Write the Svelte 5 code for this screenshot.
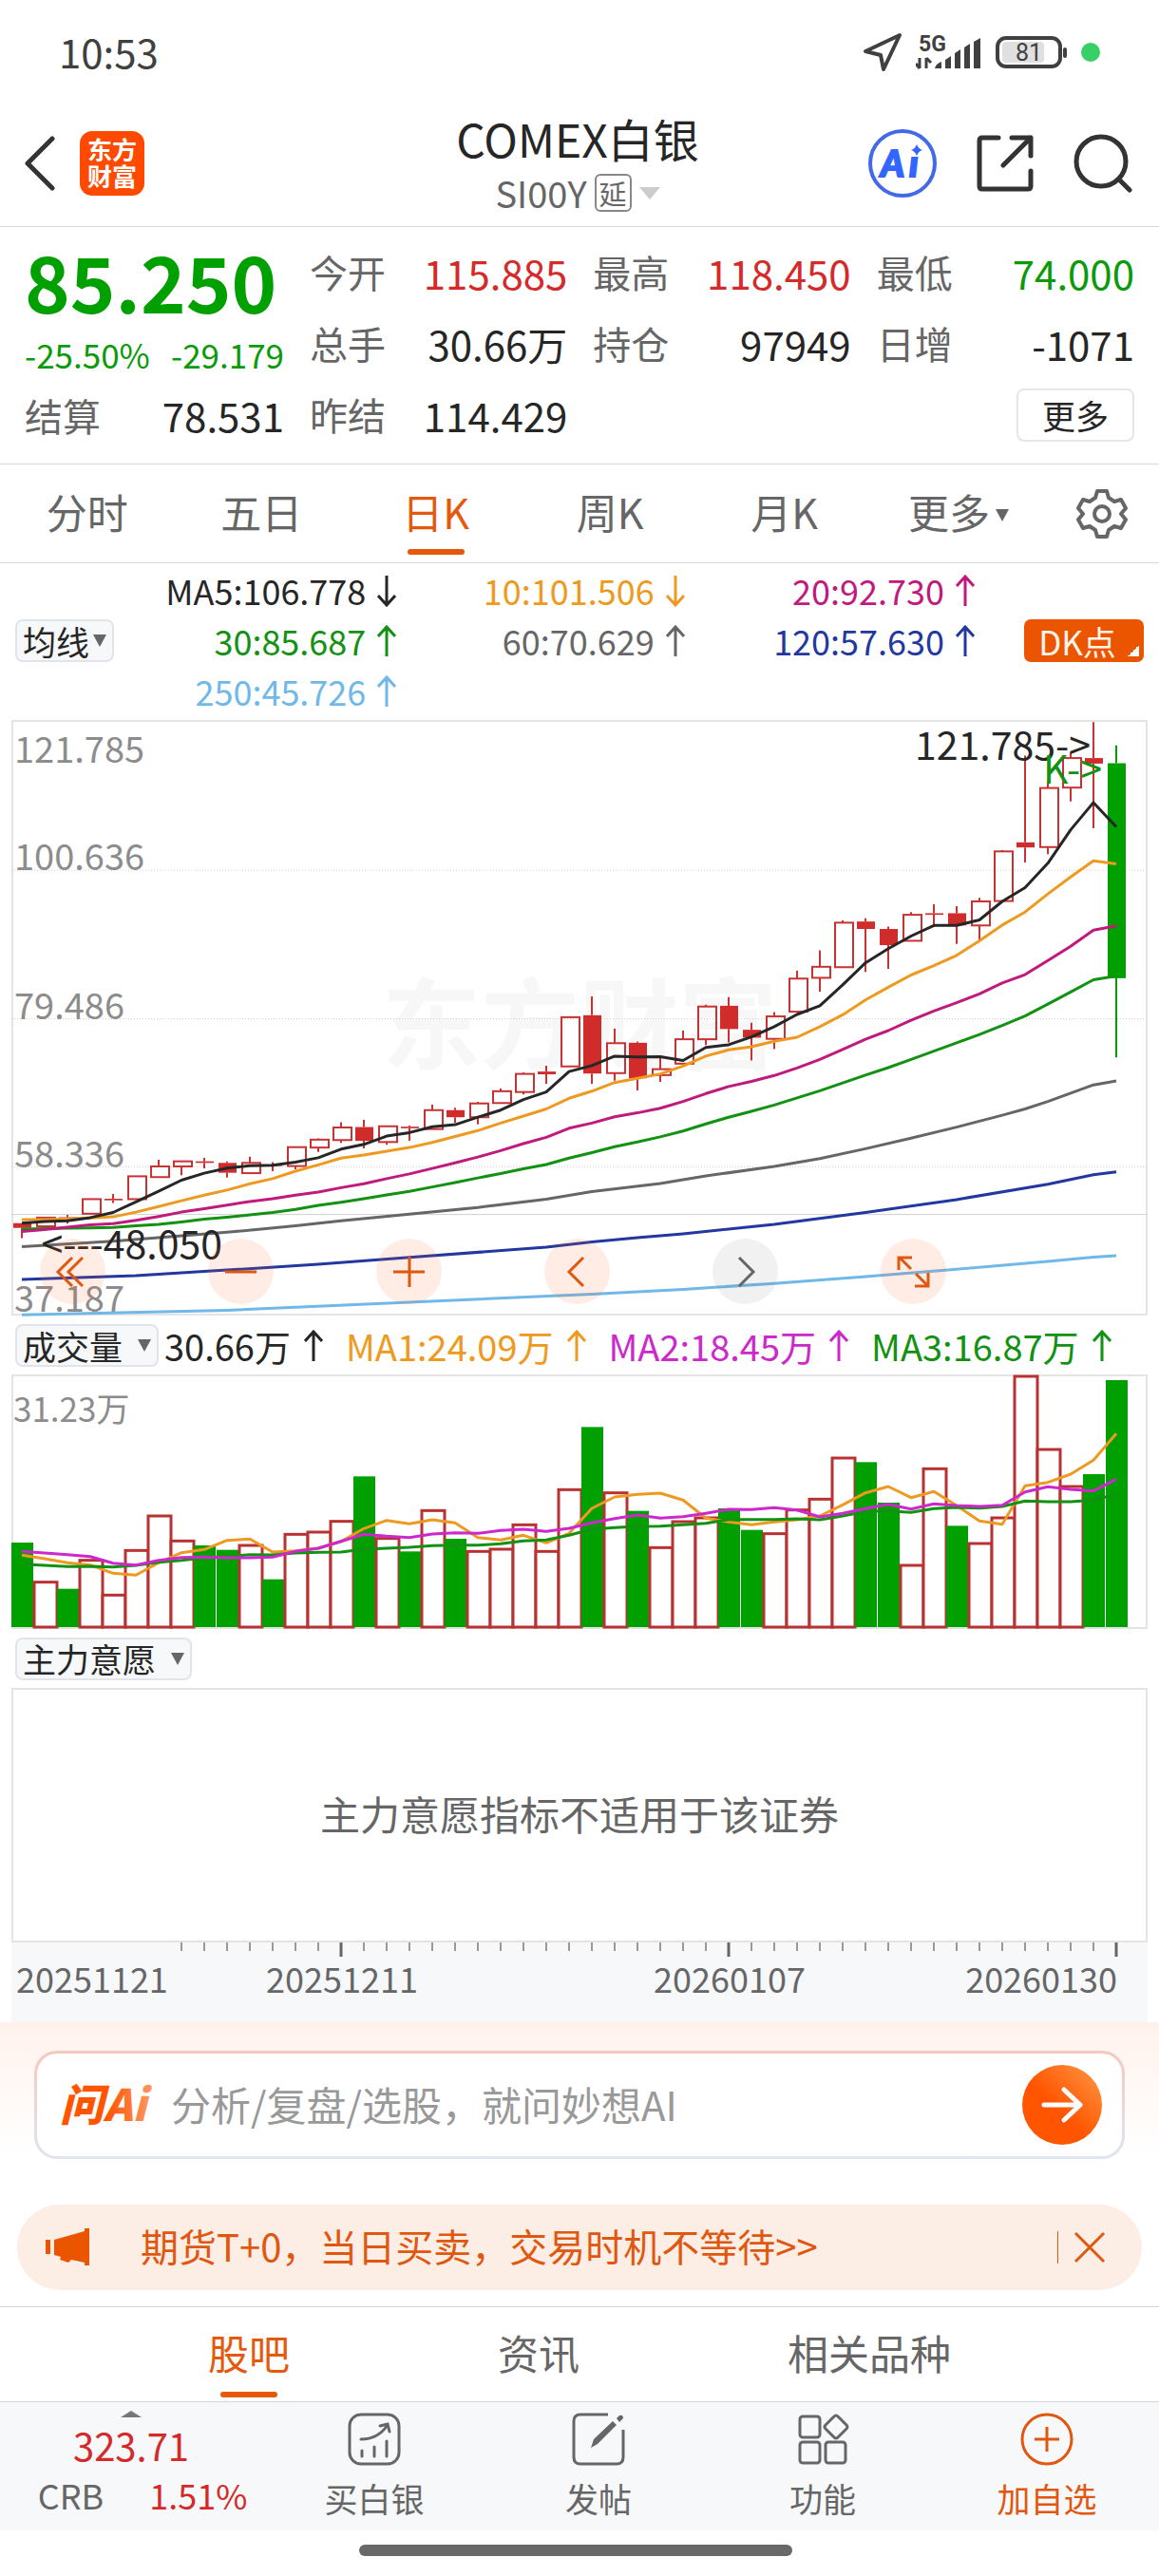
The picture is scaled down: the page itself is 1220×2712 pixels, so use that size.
<script lang="ts">
  type Kind = 'hollow' | 'solid' | 'fall';

  const quotes = [
    { label: '今开', value: '115.885', tone: 'up' },
    { label: '最高', value: '118.450', tone: 'up' },
    { label: '最低', value: '74.000', tone: 'down' },
    { label: '总手', value: '30.66万', tone: '' },
    { label: '持仓', value: '97949', tone: '' },
    { label: '日增', value: '-1071', tone: '' },
    { label: '昨结', value: '114.429', tone: '' },
  ];

  const periods = ['分时', '五日', '日K', '周K', '月K', '更多'];
  let period = $state('日K');

  const averages = [
    { text: 'MA5:106.778', tone: 'ma5', up: false },
    { text: '10:101.506', tone: 'ma10', up: false },
    { text: '20:92.730', tone: 'ma20', up: true },
    { text: '30:85.687', tone: 'ma30', up: true },
    { text: '60:70.629', tone: 'ma60', up: true },
    { text: '120:57.630', tone: 'ma120', up: true },
    { text: '250:45.726', tone: 'ma250', up: true },
  ];

  const volumeAverages = [
    { text: '30.66万', tone: 'ma5' },
    { text: 'MA1:24.09万', tone: 'ma10' },
    { text: 'MA2:18.45万', tone: 'vol2' },
    { text: 'MA3:16.87万', tone: 'ma30' },
  ];

  // body top, body bottom, high, low: ticks counted down from the chart's top
  const candles: [number, number, number, number, Kind][] = [
    [1297, 1309, 1297, 1335, 'solid'], [1283, 1305, 1283, 1305, 'hollow'], [1282, 1284, 1276, 1298, 'solid'],
    [1236, 1273, 1236, 1273, 'hollow'], [1235, 1239, 1223, 1246, 'solid'], [1178, 1236, 1178, 1236, 'hollow'],
    [1153, 1180, 1136, 1180, 'hollow'], [1140, 1153, 1140, 1175, 'hollow'], [1140, 1144, 1131, 1158, 'solid'],
    [1144, 1169, 1140, 1181, 'solid'], [1144, 1170, 1128, 1170, 'hollow'], [1149, 1152, 1142, 1165, 'solid'],
    [1104, 1152, 1104, 1160, 'hollow'], [1085, 1105, 1082, 1116, 'hollow'], [1054, 1086, 1041, 1093, 'hollow'],
    [1053, 1088, 1035, 1107, 'solid'], [1051, 1091, 1051, 1098, 'hollow'], [1052, 1056, 1049, 1088, 'solid'],
    [1010, 1058, 996, 1058, 'hollow'], [1010, 1028, 1004, 1042, 'solid'], [993, 1028, 989, 1046, 'hollow'],
    [962, 992, 955, 992, 'hollow'], [918, 964, 914, 970, 'hollow'], [912, 919, 897, 943, 'solid'],
    [774, 899, 774, 899, 'hollow'], [769, 917, 721, 943, 'solid'], [840, 916, 803, 935, 'hollow'],
    [839, 929, 836, 960, 'solid'], [906, 921, 876, 938, 'hollow'], [830, 892, 808, 892, 'hollow'],
    [747, 830, 742, 845, 'hollow'], [745, 804, 723, 838, 'solid'], [806, 826, 788, 884, 'solid'],
    [772, 829, 761, 855, 'hollow'], [676, 760, 656, 760, 'hollow'], [646, 674, 604, 709, 'hollow'],
    [534, 647, 528, 647, 'hollow'], [531, 550, 523, 659, 'solid'], [550, 591, 544, 651, 'solid'],
    [514, 580, 507, 580, 'hollow'], [510, 514, 487, 545, 'solid'], [510, 541, 492, 588, 'solid'],
    [480, 541, 471, 579, 'hollow'], [353, 479, 350, 479, 'hollow'], [330, 343, 110, 381, 'solid'],
    [192, 342, 172, 360, 'hollow'], [116, 191, 100, 226, 'hollow'], [116, 130, 25, 294, 'solid'],
    [129, 675, 84, 876, 'fall'],
  ];

  const ma5 = [1297, 1293, 1291, 1283, 1270, 1243, 1216, 1188, 1170, 1157, 1151, 1150, 1142, 1131, 1109, 1097, 1076, 1067, 1052, 1047, 1028, 1010, 983, 964, 912, 897, 873, 875, 874, 884, 851, 844, 824, 798, 767, 745, 692, 636, 600, 568, 541, 541, 527, 480, 445, 383, 298, 229, 291];
  const ma10 = [1288, 1288, 1286, 1284, 1281, 1269, 1255, 1240, 1226, 1213, 1197, 1184, 1165, 1149, 1132, 1124, 1114, 1105, 1092, 1077, 1062, 1043, 1025, 1007, 980, 962, 940, 929, 918, 898, 873, 857, 849, 835, 825, 798, 768, 730, 698, 667, 643, 617, 580, 540, 507, 461, 418, 377, 385];
  const ma20 = [1318, 1313, 1307, 1301, 1298, 1290, 1280, 1269, 1260, 1251, 1242, 1235, 1226, 1218, 1207, 1197, 1184, 1172, 1158, 1144, 1129, 1113, 1095, 1079, 1056, 1043, 1027, 1017, 1005, 988, 968, 950, 937, 922, 903, 881, 856, 830, 808, 782, 758, 737, 715, 687, 666, 630, 594, 553, 542];
  const ma30 = [1312, 1311, 1310, 1309, 1308, 1304, 1300, 1294, 1287, 1282, 1276, 1270, 1262, 1252, 1244, 1235, 1225, 1216, 1205, 1194, 1182, 1171, 1159, 1148, 1132, 1118, 1103, 1091, 1078, 1063, 1045, 1028, 1013, 997, 979, 961, 941, 921, 902, 881, 860, 839, 818, 795, 771, 741, 710, 679, 669];

  // the slow averages bend so little that a few [day, level] points carry them
  const ma60 = [[0, 1357], [4, 1343], [9, 1320], [12, 1304], [14, 1291], [17, 1274], [20, 1257], [23, 1236], [25, 1217], [28, 1196], [30, 1177], [33, 1153], [35, 1133], [37, 1108], [39, 1081], [41, 1053], [43, 1023], [44, 1007], [45, 988], [46, 967], [47, 946], [48, 936]];
  const ma120 = [[0, 1440], [5, 1430], [9, 1416], [13, 1401], [17, 1384], [23, 1358], [25, 1345], [27, 1334], [29, 1324], [33, 1300], [37, 1270], [41, 1237], [45, 1198], [47, 1174], [48, 1167]];
  const ma250 = [[0, 1530], [9, 1518], [17, 1498], [25, 1477], [29, 1465], [33, 1450], [37, 1433], [41, 1414], [45, 1394], [47, 1383], [48, 1380]];

  const volumes = [732, 857, 878, 788, 898, 757, 648, 727, 741, 755, 741, 848, 706, 699, 665, 523, 719, 760, 631, 720, 760, 753, 676, 760, 565, 367, 575, 632, 748, 666, 654, 624, 692, 704, 629, 595, 465, 478, 606, 804, 499, 679, 735, 654, 207, 438, 555, 516, 219];
  const fallDays = [0, 2, 8, 9, 11, 15, 17, 19, 25, 27, 31, 32, 37, 38, 41, 47, 48];
  const vol1 = [772, 783, 796, 803, 829, 835, 796, 764, 754, 725, 721, 762, 758, 750, 728, 688, 662, 673, 660, 670, 716, 724, 709, 733, 703, 624, 588, 580, 576, 598, 655, 667, 676, 667, 660, 648, 613, 575, 555, 590, 571, 615, 664, 674, 553, 542, 516, 472, 388];
  const vol2 = [760, 765, 770, 776, 797, 803, 788, 779, 778, 780, 780, 778, 760, 750, 728, 706, 712, 716, 705, 701, 703, 694, 690, 697, 687, 670, 656, 645, 655, 650, 640, 627, 628, 622, 629, 651, 640, 625, 611, 626, 610, 615, 618, 614, 572, 556, 564, 569, 532];
  const vol3 = [800, 804, 808, 807, 809, 804, 794, 788, 780, 776, 770, 771, 765, 763, 762, 753, 750, 747, 742, 740, 740, 736, 727, 724, 709, 690, 685, 681, 680, 676, 671, 659, 659, 659, 657, 660, 648, 634, 632, 637, 625, 621, 623, 618, 601, 603, 603, 598, 580];

  const x = (day: number) => 11 + day * 24;
  const y = (level: number) => level * 0.4146 - 8;
  const vy = (level: number) => (level - 204) / 3 + 1;

  const line = (levels: number[], scale: (v: number) => number) =>
    levels.map((level, day) => `${x(day)},${scale(level).toFixed(1)}`).join(' ');
  const sparse = (points: number[][]) =>
    points.map(([day, level]) => `${x(day)},${y(level).toFixed(1)}`).join(' ');

  const priceLabels = [
    { text: '121.785', y: 45 },
    { text: '100.636', y: 158 },
    { text: '79.486', y: 315 },
    { text: '58.336', y: 471 },
    { text: '37.187', y: 623 },
  ];

  const ticks = Array.from({ length: 42 }, (_, i) => i + 7);
  const longTicks = [14, 31, 48];

  const sections = ['股吧', '资讯', '相关品种'];
  let section = $state('股吧');
  let question = $state('');
</script>

{#snippet arrow(up: boolean)}
  <svg class="arrow" class:flip={!up} viewBox="0 0 20 34" aria-hidden="true">
    <path d="M10 33V2M1 12L10 2L19 12" />
  </svg>
{/snippet}

<main>
  <div class="status">
    <time>10:53</time>
    <div class="status-icons">
      <svg width="42" height="42" viewBox="0 0 42 42" fill="none" stroke="#404040" stroke-width="4" stroke-linejoin="round">
        <path d="M3 20L39 3L22 39L19 24Z" />
      </svg>
      <svg width="70" height="38" viewBox="0 0 70 38" fill="#404040">
        <text x="3" y="18" class="net">5G</text>
        <path d="M4 25V36M4 36L0 31M11 36V25M11 25L16 30" stroke="#404040" stroke-width="3" fill="none" />
        <path d="M20 36Q21 31 27 29V36ZM31 36V27L37 23V36ZM41 36V20L47 16V36ZM51 36V14L57 10V36ZM61 36V8L68 4V36Z" />
      </svg>
      <svg width="76" height="34" viewBox="0 0 76 34" fill="none">
        <rect x="2" y="2" width="66" height="30" rx="9" stroke="#404040" stroke-width="4" />
        <rect x="7" y="6" width="44" height="22" rx="4" fill="#e0e0e0" />
        <rect x="71" y="12" width="4" height="11" rx="2" fill="#404040" />
        <text x="35" y="26" text-anchor="middle" class="charge">81</text>
      </svg>
      <span class="live"></span>
    </div>
  </div>

  <header>
    <div class="side">
      <button class="plain" aria-label="返回">
        <svg width="34" height="58" viewBox="0 0 34 58" class="icon"><path d="M31 3L5 29L31 55" /></svg>
      </button>
      <svg width="68" height="68" viewBox="0 0 68 68" aria-label="东方财富">
        <rect width="68" height="68" rx="13" fill="#ff4a00" />
        <text x="34" y="30" text-anchor="middle" class="brand">东方</text>
        <text x="34" y="58" text-anchor="middle" class="brand">财富</text>
      </svg>
    </div>
    <div class="title">
      <h1>COMEX白银</h1>
      <button class="plain symbol">SI00Y<span class="delay">延</span><span class="caret pale"></span></button>
    </div>
    <div class="side right">
      <button class="plain" aria-label="Ai">
        <svg width="72" height="72" viewBox="0 0 72 72">
          <circle cx="36" cy="36" r="34" fill="none" stroke="#4169e8" stroke-width="4" />
          <text x="13" y="50" class="ai">A</text>
          <text x="43" y="50" class="ai">ı</text>
          <path d="M51 16Q53 21 57 22Q53 23 51 28Q49 23 45 22Q49 21 51 16Z" fill="#3366ff" />
        </svg>
      </button>
      <button class="plain" aria-label="分享">
        <svg width="60" height="60" viewBox="0 0 60 60" class="icon">
          <path d="M23 3H6Q3 3 3 6V54Q3 57 6 57H54Q57 57 57 54V38M37 3H57V22M57 3L28 32" />
        </svg>
      </button>
      <button class="plain" aria-label="搜索">
        <svg width="62" height="62" viewBox="0 0 62 62" class="icon">
          <circle cx="29" cy="29" r="26" />
          <path d="M48 48L59 59" />
        </svg>
      </button>
    </div>
  </header>

  <section class="quote">
    <div class="last">
      <strong>85.250</strong>
      <p class="change"><span>-25.50%</span><span>-29.179</span></p>
      <p class="pair"><span>结算</span><b>78.531</b></p>
    </div>
    <div class="details">
      {#each quotes as q}
        <p class="pair"><span>{q.label}</span><b class={q.tone}>{q.value}</b></p>
      {/each}
      <button class="more">更多</button>
    </div>
  </section>

  <nav class="periods">
    {#each periods as p}
      <button class="plain tab" class:active={period === p} onclick={() => (period = p)}>
        {p}{#if p === '更多'}<span class="caret small"></span>{/if}
      </button>
    {/each}
    <button class="plain gear" aria-label="设置">
      <svg width="54" height="54" viewBox="0 0 54 54" fill="none" stroke="#666" stroke-width="4" stroke-linejoin="round">
        <path d="M22 3H32L34 10L40 14L47 12L52 21L47 27L52 33L47 42L40 40L34 44L32 51H22L20 44L14 40L7 42L2 33L7 27L2 21L7 12L14 14L20 10Z" />
        <circle cx="27" cy="27" r="8" />
      </svg>
    </button>
  </nav>

  <section class="legend">
    <button class="pill">均线<span class="caret small"></span></button>
    <div class="averages">
      {#each averages as a}
        <span class={a.tone}>{a.text}{@render arrow(a.up)}</span>
      {/each}
    </div>
    <button class="dk">DK点</button>
  </section>

  <section class="chart">
    <svg viewBox="0 0 1196 628" class="plot">
      <text x="598" y="360" text-anchor="middle" class="watermark">东方财富</text>
      <rect x="1" y="1" width="1194" height="625" class="frame" />
      {#each [401, 778, 1154] as level}
        <line x1="0" x2="1196" y1={y(level)} y2={y(level)} class="grid" />
      {/each}
      <line x1="0" x2="1196" y1={y(1275)} y2={y(1275)} class="rule" />
      {#each priceLabels as label}
        <text x="3" y={label.y} class="scale">{label.text}</text>
      {/each}
      {#each candles as [top, bottom, high, low, kind], day}
        <g class={kind}>
          <line x1={x(day)} x2={x(day)} y1={y(high)} y2={y(top)} />
          <line x1={x(day)} x2={x(day)} y1={y(bottom)} y2={y(low)} />
          {#if kind === 'hollow'}
            <rect x={x(day) - 8} y={y(top)} width="19" height={y(bottom) - y(top)} />
          {:else}
            <rect x={x(day) - 9} y={y(top)} width="19" height={y(bottom) - y(top)} />
          {/if}
        </g>
      {/each}
      <polyline points={sparse(ma250)} class="curve ma250" />
      <polyline points={sparse(ma120)} class="curve ma120" />
      <polyline points={sparse(ma60)} class="curve ma60" />
      <polyline points={line(ma30, y)} class="curve ma30" />
      <polyline points={line(ma20, y)} class="curve ma20" />
      <polyline points={line(ma10, y)} class="curve ma10" />
      <polyline points={line(ma5, y)} class="curve ma5" />
      <text x="222" y="567" text-anchor="end" class="mark">&lt;---48.050</text>
      <text x="1136" y="42" text-anchor="end" class="mark">121.785-&gt;</text>
      <text x="1148" y="67" text-anchor="end" class="mark k">K-&gt;</text>
    </svg>
    <div class="tools">
      <button aria-label="最左"><svg viewBox="0 0 69 69"><path d="M34 20L19 35L34 50M45 20L30 35L45 50" /></svg></button>
      <button aria-label="缩小"><svg viewBox="0 0 69 69"><path d="M18 35H51" /></svg></button>
      <button aria-label="放大"><svg viewBox="0 0 69 69"><path d="M18 35H51M35 19V51" /></svg></button>
      <button aria-label="左移"><svg viewBox="0 0 69 69"><path d="M41 20L26 35L41 50" /></svg></button>
      <button aria-label="右移" class="off"><svg viewBox="0 0 69 69"><path d="M28 20L43 35L28 50" /></svg></button>
      <button aria-label="全屏"><svg viewBox="0 0 69 69"><path d="M19 33V20H33M20 20L32 32M37 37L49 49M50 36V50H36" /></svg></button>
    </div>
  </section>

  <div class="bar volume-bar">
    <button class="pill">成交量<span class="caret"></span></button>
    {#each volumeAverages as v}
      <span class={v.tone}>{v.text}{@render arrow(true)}</span>
    {/each}
  </div>

  <section class="chart">
    <svg viewBox="0 0 1196 268" class="plot">
      <rect x="1" y="1" width="1194" height="266" class="frame" />
      <text x="2" y="50" class="scale volume-label">31.23万</text>
      {#each volumes as level, day}
        {#if fallDays.includes(day)}
          <rect x={x(day) - 11} y={vy(level)} width="23" height={266 - vy(level)} class="bar-fall" />
        {:else}
          <rect x={x(day) - 11} y={vy(level)} width="24" height={266 - vy(level)} class="bar-rise" />
        {/if}
      {/each}
      <polyline points={line(vol1, vy)} class="curve ma10" />
      <polyline points={line(vol3, vy)} class="curve ma30" />
      <polyline points={line(vol2, vy)} class="curve vol2" />
    </svg>
  </section>

  <div class="bar">
    <button class="pill">主力意愿<span class="caret"></span></button>
  </div>

  <section class="empty">主力意愿指标不适用于该证券</section>

  <section class="dates">
    <svg viewBox="0 0 1196 84" class="plot">
      {#each ticks as day}
        <line x1={x(day)} x2={x(day)} y1="0" y2={longTicks.includes(day) ? 15 : 9} class="tick" class:long={longTicks.includes(day)} />
      {/each}
      <text x="5" y="53">20251121</text>
      <text x="348" y="53" text-anchor="middle">20251211</text>
      <text x="756" y="53" text-anchor="middle">20260107</text>
      <text x="1164" y="53" text-anchor="end">20260130</text>
    </svg>
  </section>

  <section class="assistant">
    <form class="ask" onsubmit={(e) => e.preventDefault()}>
      <svg width="104" height="64" viewBox="0 0 104 64" aria-hidden="true">
        <defs>
          <linearGradient id="flame" x1="0" x2="1">
            <stop offset="0.5" stop-color="#ff5500" />
            <stop offset="1" stop-color="#ff9966" />
          </linearGradient>
        </defs>
        <text x="3" y="49" class="ask-logo" fill="url(#flame)">问Ai</text>
      </svg>
      <input type="text" aria-label="提问" placeholder="分析/复盘/选股，就问妙想AI" bind:value={question} />
      <button class="send" aria-label="发送">
        <svg width="84" height="84" viewBox="0 0 84 84"><path d="M23 42H61M44 26L61 42L44 58" /></svg>
      </button>
    </form>
  </section>

  <aside class="notice">
    <svg width="48" height="42" viewBox="0 0 48 42" fill="#eb5500">
      <path d="M0 13H5V28H0ZM9 13L41 4V1H46V40H41V37L27 34L24 37L15 34L16 31L9 29Z" />
    </svg>
    <a href="#trade">期货T+0，当日买卖，交易时机不等待&gt;&gt;</a>
    <button class="plain close" aria-label="关闭">
      <svg width="34" height="34" viewBox="0 0 34 34"><path d="M2 2L32 32M32 2L2 32" /></svg>
    </button>
  </aside>

  <nav class="sections">
    {#each sections as s}
      <button class="plain tab" class:active={section === s} onclick={() => (section = s)}>{s}</button>
    {/each}
  </nav>

  <footer>
    <button class="plain index">
      <span class="caret rise"></span>
      <span class="index-value">323.71</span>
      <span class="index-row"><span>CRB</span><span class="up">1.51%</span></span>
    </button>
    <button class="plain action">
      <svg width="56" height="56" viewBox="0 0 56 56">
        <rect x="2" y="2" width="52" height="52" rx="12" />
        <path d="M14 28Q32 28 42 13M34 14L42 12L44 20M15 40V46M28 36V46M41 30V46" stroke-linecap="round" />
      </svg>
      买白银
    </button>
    <button class="plain action">
      <svg width="56" height="56" viewBox="0 0 56 56">
        <path d="M38 2H9Q2 2 2 9V47Q2 54 9 54H47Q54 54 54 47V18" />
        <path d="M20 37L23 28L43 9L47 13L27 33ZM47 6L50 3Q54 2 54 6L50 10Z" fill="#666" stroke="none" />
      </svg>
      发帖
    </button>
    <button class="plain action">
      <svg width="56" height="56" viewBox="0 0 56 56">
        <rect x="4" y="4" width="21" height="22" rx="3" />
        <rect x="4" y="31" width="21" height="22" rx="3" />
        <rect x="31" y="31" width="21" height="22" rx="3" />
        <path d="M40 4Q42 2 44 4L53 13Q55 15 53 17L44 26Q42 28 40 26L31 17Q29 15 31 13Z" />
      </svg>
      功能
    </button>
    <button class="plain action add">
      <svg width="56" height="56" viewBox="0 0 56 56">
        <circle cx="28" cy="28" r="26" />
        <path d="M28 15V41M15 28H41" />
      </svg>
      加自选
    </button>
  </footer>

  <div class="home"><span></span></div>
</main>

<style>
  :global(body) {
    margin: 0;
    background: #fff;
  }

  main {
    font-family: 'Noto Sans CJK SC', sans-serif;
    color: #262626;
    background: #fff;
  }

  h1, p {
    margin: 0;
    font-weight: 400;
  }

  svg {
    display: block;
    flex: none;
  }

  button {
    font-family: inherit;
    color: inherit;
    cursor: pointer;
  }

  .plain {
    padding: 0;
    border: 0;
    background: none;
  }

  .up { color: #d42a2a; }
  .down { color: #0a9a0a; }

  .caret {
    display: inline-block;
    border: 7px solid transparent;
    border-top: 13px solid #666;
    border-bottom: 0;
  }

  .caret.small {
    margin-left: 4px;
  }

  .caret.pale {
    border-width: 13px 11px 0;
    border-top-color: #ccc;
  }

  .caret.rise {
    border-width: 0 11px 7px;
    border-bottom: 7px solid #777;
    border-top: 0;
  }

  .status {
    display: flex;
    align-items: center;
    justify-content: space-between;
    height: 106px;
    padding: 0 62px;
    color: #404040;
  }

  time {
    font-size: 42px;
  }

  .status-icons {
    display: flex;
    align-items: center;
    gap: 14px;
    padding-top: 4px;
  }

  .net {
    font: 700 23px Roboto, sans-serif;
  }

  .charge {
    font: 400 25px Roboto, sans-serif;
    fill: #404040;
  }

  .live {
    width: 20px;
    height: 20px;
    border-radius: 50%;
    background: #37d067;
  }

  header {
    display: grid;
    grid-template-columns: 1fr auto 1fr;
    align-items: center;
    height: 132px;
    padding: 0 28px 0 24px;
    border-bottom: 1px solid #d8d8d8;
  }

  .side {
    display: flex;
    align-items: center;
    gap: 26px;
  }

  .right {
    justify-content: flex-end;
    gap: 42px;
  }

  .icon {
    fill: none;
    stroke: #333;
    stroke-width: 5;
    stroke-linecap: round;
    stroke-linejoin: round;
  }

  .brand {
    font-size: 26px;
    font-weight: 700;
    fill: #fff;
  }

  .ai {
    font: italic 900 38px Lato, sans-serif;
    fill: #3366ff;
    stroke: #3366ff;
    stroke-width: 2;
  }

  .title {
    display: flex;
    flex-direction: column;
    align-items: center;
  }

  h1 {
    font-size: 48px;
    line-height: 62px;
  }

  .symbol {
    display: flex;
    align-items: center;
    gap: 8px;
    font-size: 38px;
    line-height: 54px;
    color: #666;
  }

  .delay {
    padding: 0 3px;
    border: 2px solid #888;
    border-radius: 6px;
    font-size: 29px;
    line-height: 36px;
  }

  .quote {
    display: flex;
    gap: 27px;
    padding: 10px 26px 14px;
    border-bottom: 1px solid #d8d8d8;
  }

  .last {
    flex: 1;
  }

  .last strong {
    display: block;
    font-size: 81px;
    line-height: 92px;
    color: #00a000;
  }

  .change {
    display: flex;
    justify-content: space-between;
    font-size: 35px;
    line-height: 64px;
    color: #0a9a0a;
  }

  .details {
    flex: 3;
    display: grid;
    grid-template-columns: repeat(3, 1fr);
    grid-auto-rows: 75px;
    column-gap: 27px;
    min-width: 868px;
  }

  .pair {
    display: flex;
    justify-content: space-between;
    font-size: 40px;
    line-height: 75px;
    color: #666;
  }

  .last .pair {
    line-height: 64px;
  }

  .pair b {
    font-size: 42px;
    font-weight: 400;
    color: #262626;
  }

  .pair b.up { color: #d42a2a; }
  .pair b.down { color: #0a9a0a; }

  .more {
    grid-column: 3;
    align-self: center;
    justify-self: end;
    width: 124px;
    height: 56px;
    padding: 0;
    border: 2px solid #e6e6e6;
    border-radius: 8px;
    background: #fff;
    font-size: 35px;
    line-height: 48px;
  }

  .periods {
    display: flex;
    height: 103px;
    border-bottom: 1px solid #d8d8d8;
  }

  .tab {
    position: relative;
    padding-bottom: 6px;
    font-size: 43px;
    line-height: 92px;
    color: #666;
  }

  .periods .tab {
    flex: 183;
  }

  .tab .caret {
    margin-left: 6px;
    vertical-align: 8px;
  }

  .tab.active {
    color: #e5590d;
  }

  .tab.active::after {
    content: '';
    position: absolute;
    bottom: 8px;
    left: 50%;
    width: 60px;
    height: 6px;
    margin-left: -30px;
    border-radius: 3px;
    background: #e5590d;
  }

  .gear {
    flex: 119;
    display: flex;
    align-items: center;
    justify-content: center;
  }

  .legend {
    display: flex;
    align-items: center;
    padding: 2px 16px 4px;
  }

  .pill {
    display: flex;
    align-items: center;
    height: 45px;
    padding: 0 6px;
    border: 2px solid #e1e4ea;
    border-radius: 8px;
    background: #f7f8fa;
    font-size: 35px;
    line-height: 36px;
    white-space: nowrap;
  }

  .bar .caret {
    margin-left: 16px;
  }

  .averages {
    flex: 1;
    display: grid;
    grid-template-columns: 296fr 302fr 304fr;
    margin-right: 52px;
    font-size: 36px;
    line-height: 53px;
  }

  .averages span,
  .volume-bar > span {
    display: flex;
    align-items: center;
    justify-content: flex-end;
    gap: 12px;
    white-space: nowrap;
  }

  .arrow {
    width: 20px;
    height: 34px;
    fill: none;
    stroke: currentColor;
    stroke-width: 3;
  }

  .flip {
    transform: rotate(180deg);
  }

  .ma5 { color: #262626; }
  .ma10 { color: #ee9a20; }
  .ma20 { color: #c01a7d; }
  .ma30 { color: #129112; }
  .ma60 { color: #666; }
  .ma120 { color: #2238a0; }
  .ma250 { color: #70b8e8; }
  .vol2 { color: #cc28cc; }

  .dk {
    width: 126px;
    height: 45px;
    padding: 0 14px 0 0;
    border: 0;
    border-radius: 7px;
    background: linear-gradient(135deg, transparent 50%, #fff 50%) right 5px bottom 6px / 12px 12px no-repeat, #eb5500;
    font-size: 35px;
    line-height: 42px;
    color: #fff3ea;
  }

  .chart {
    position: relative;
    margin: 0 12px;
  }

  .plot {
    width: 100%;
    height: auto;
  }

  .frame {
    fill: none;
    stroke: #e4e4e4;
    stroke-width: 2;
  }

  .grid {
    stroke: #d0d0d0;
    stroke-dasharray: 1 2;
  }

  .rule {
    stroke: #d0d0d0;
  }

  .watermark {
    font-size: 104px;
    font-weight: 700;
    fill: #f7f7f7;
  }

  .scale {
    font-size: 38px;
    fill: #8c8c8c;
  }

  .volume-label {
    font-size: 35px;
  }

  .mark {
    font-size: 41px;
    fill: #262626;
  }

  .mark.k {
    fill: #129112;
  }

  .hollow, .solid {
    stroke: #c83232;
    stroke-width: 2;
  }

  .hollow {
    fill: #fff;
    fill-opacity: 0;
  }

  .solid rect {
    fill: #d02c2c;
    stroke: none;
  }

  .fall {
    fill: #00a000;
    stroke: #00a000;
    stroke-width: 2;
  }

  .fall rect {
    stroke: none;
  }

  .curve {
    fill: none;
    stroke: currentColor;
    stroke-width: 3;
    stroke-linejoin: round;
  }

  .bar-fall {
    fill: #00a000;
  }

  .bar-rise {
    fill: #fff;
    stroke: #b83232;
    stroke-width: 3;
  }

  .tools {
    position: absolute;
    bottom: 13px;
    left: 30px;
    display: flex;
    gap: 108px;
  }

  .tools button {
    width: 69px;
    height: 69px;
    padding: 0;
    border: 0;
    border-radius: 50%;
    background: rgba(255, 100, 30, 0.12);
    color: #e0570f;
  }

  .tools .off {
    background: rgba(120, 120, 120, 0.1);
    color: #666;
  }

  .tools path {
    fill: none;
    stroke: currentColor;
    stroke-width: 3;
  }

  .bar {
    display: flex;
    align-items: center;
    height: 62px;
    padding: 0 16px;
  }

  .volume-bar {
    height: 61px;
    font-size: 38px;
    line-height: 54px;
  }

  .volume-bar > span {
    gap: 14px;
    margin-right: 24px;
  }

  .volume-bar .pill {
    margin-right: 6px;
  }

  .empty {
    display: flex;
    align-items: center;
    justify-content: center;
    height: 258px;
    margin: 0 12px;
    padding-bottom: 6px;
    border: 2px solid #e4e4e4;
    font-size: 42px;
    color: #666;
  }

  .dates {
    margin: 0 12px;
    background: #f7f8fa;
  }

  .dates text {
    font-size: 36px;
    fill: #666;
  }

  .tick {
    stroke: #999;
    stroke-width: 2;
  }

  .long {
    stroke: #666;
    stroke-width: 3;
  }

  .assistant {
    padding: 30px 36px 32px;
    background: linear-gradient(#fff2ec, #fff 80%);
  }

  .ask {
    display: flex;
    align-items: center;
    height: 108px;
    padding: 0 21px;
    border: 3px solid transparent;
    border-radius: 24px;
    background: linear-gradient(#fff, #fff) padding-box, linear-gradient(#f5c8be, #dfe5f0) border-box;
  }

  .ask-logo {
    font-size: 46px;
    font-weight: 900;
    font-style: italic;
  }

  .ask input {
    flex: 1;
    min-width: 0;
    margin-left: 16px;
    padding: 0 0 4px;
    border: 0;
    outline: none;
    background: none;
    font: 42px 'Noto Sans CJK SC', sans-serif;
  }

  .ask input::placeholder {
    color: #999;
    opacity: 1;
  }

  .send {
    padding: 0;
    border: 0;
    border-radius: 50%;
    background: linear-gradient(225deg, #ff9a48, #ff5500 55%);
  }

  .send path {
    fill: none;
    stroke: #fff;
    stroke-width: 5;
    stroke-linecap: round;
    stroke-linejoin: round;
  }

  .notice {
    display: flex;
    align-items: center;
    height: 90px;
    margin: 16px 18px 17px;
    padding: 0 38px 0 30px;
    border-radius: 45px;
    background: #fdeee5;
  }

  .notice a {
    flex: 1;
    margin-left: 52px;
    padding-bottom: 4px;
    font-size: 40px;
    line-height: 84px;
    color: #e0570f;
    text-decoration: none;
  }

  .close {
    padding-left: 16px;
    border-left: 1px solid #e0570f;
  }

  .close path {
    stroke: #e0570f;
    stroke-width: 3;
  }

  .sections {
    display: flex;
    justify-content: space-evenly;
    height: 99px;
    border-top: 1px solid #d8d8d8;
    border-bottom: 1px solid #d3d7de;
  }

  .sections .tab.active::after {
    bottom: 4px;
  }

  footer {
    display: grid;
    grid-template-columns: 276fr repeat(4, 236fr);
    height: 135px;
    background: #f7f8fa;
  }

  .index,
  .action {
    display: flex;
    flex-direction: column;
    align-items: center;
    color: #666;
  }

  .index {
    padding-top: 9px;
  }

  .index-value {
    font-size: 40px;
    line-height: 58px;
    color: #d42a2a;
  }

  .index-row {
    display: flex;
    gap: 48px;
    padding-left: 24px;
    font-size: 36px;
    line-height: 46px;
  }

  .action {
    gap: 8px;
    padding-top: 11px;
    font-size: 35px;
    line-height: 52px;
  }

  .action svg {
    fill: none;
    stroke: currentColor;
    stroke-width: 3;
  }

  .add {
    color: #e0570f;
  }

  .home {
    display: flex;
    justify-content: center;
    padding: 15px 8px 21px 0;
  }

  .home span {
    width: 456px;
    height: 12px;
    border-radius: 6px;
    background: #696969;
  }
</style>
